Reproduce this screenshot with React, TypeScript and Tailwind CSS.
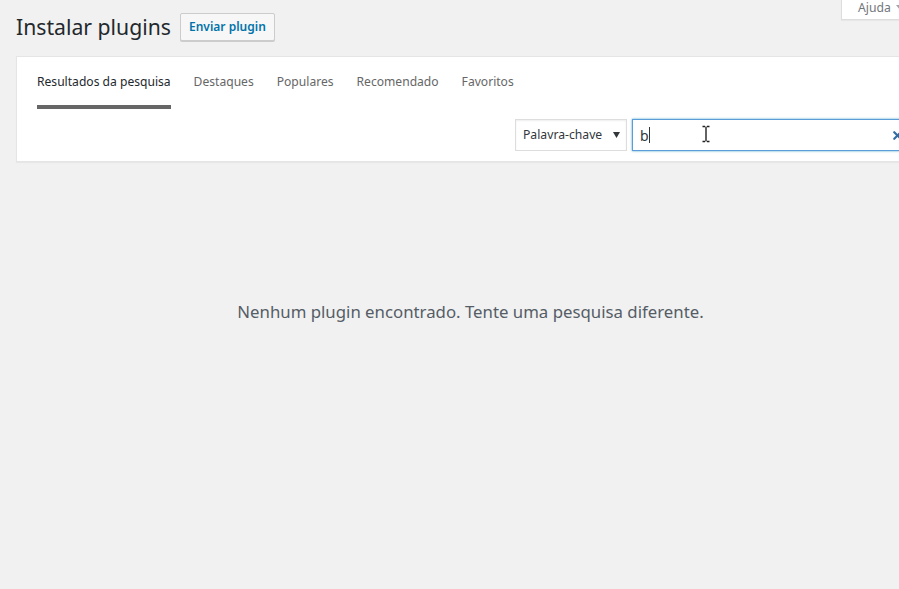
import { X } from 'lucide-react';

const tabs = ['Resultados da pesquisa', 'Destaques', 'Populares', 'Recomendado', 'Favoritos'];

export default function App() {
  return (
    <div className="relative h-[589px] w-[899px] overflow-hidden bg-[#f1f1f1] font-['Noto_Sans',sans-serif] text-[#444]">
      {/* Help tab */}
      <div className="absolute left-[841px] top-0 flex h-[20px] w-[90px] items-start gap-[5px] border border-t-0 border-[#ddd] bg-white pl-[16px] pt-[0px] text-[12.2px] leading-[16px] text-[#72777c] shadow-[0_1px_1px_rgba(0,0,0,0.04)]">
        Ajuda
        <svg className="mt-[5px]" width="8" height="6" viewBox="0 0 8 6">
          <path d="M0 0h8L4 5z" fill="#a0a5aa" />
        </svg>
      </div>

      <div className="pl-4 pt-[12px]">
        <div className="flex items-center gap-[9px]">
          <h1 className="text-[21.2px] font-normal leading-[30px] text-[#23282d]">Instalar plugins</h1>
          <button className="h-[28px] w-[95px] rounded-[2px] border border-[#ccc] bg-[#f7f7f7] text-[12px] font-semibold text-[#0073aa] shadow-[0_1px_0_#ccc]">
            Enviar plugin
          </button>
        </div>

        <div className="mt-[14px] w-[905px] border border-[#e5e5e5] bg-white shadow-[0_1px_1px_rgba(0,0,0,0.04)]">
          <ul className="flex gap-[23px] pl-[20px] pt-[16px] text-[12.1px]">
            {tabs.map((t, i) => (
              <li
                key={t}
                className={
                  i === 0
                    ? 'border-b-4 border-[#666] pb-[14px] text-[#23282d]'
                    : 'border-b-4 border-transparent pb-[14px] text-[#666]'
                }
              >
                {t}
              </li>
            ))}
          </ul>

          <div className="flex justify-end gap-[5px] pb-[10px] pr-[8px] pt-[10px]">
            <div className="flex h-[32px] w-[112px] items-center justify-between border border-[#ddd] bg-white pl-[7px] pr-[6px] text-[12.2px] text-[#32373c] shadow-[inset_0_1px_2px_rgba(0,0,0,0.07)]">
              Palavra-chave
              <svg width="7" height="6" viewBox="0 0 7 6">
                <path d="M0 0h7L3.5 6z" fill="#32373c" />
              </svg>
            </div>
            <div className="relative flex h-[32px] w-[280px] items-center border border-[#5b9dd9] bg-white pl-[7px] text-[14px] text-[#32373c] shadow-[0_0_2px_rgba(30,140,190,0.8)]">
              <span>b</span>
              <span className="h-[16px] w-px bg-[#32373c]" />
              <svg className="absolute left-[68px] top-[5px]" width="10" height="18" viewBox="0 0 10 18">
                <path d="M1.5 1.5h2.5M6 1.5H8.5M5 1.5v15M1.5 16.5H4M6 16.5h2.5" stroke="#222" strokeWidth="1.4" fill="none" />
              </svg>
              <X className="absolute right-[7px] top-[9px] h-[13px] w-[13px] text-[#2e6da4]" strokeWidth={4} />
            </div>
          </div>
        </div>
      </div>

      <p className="mt-[137px] pl-[42px] text-center text-[16.8px] text-[#555d66]">
        Nenhum plugin encontrado. Tente uma pesquisa diferente.
      </p>
    </div>
  );
}
